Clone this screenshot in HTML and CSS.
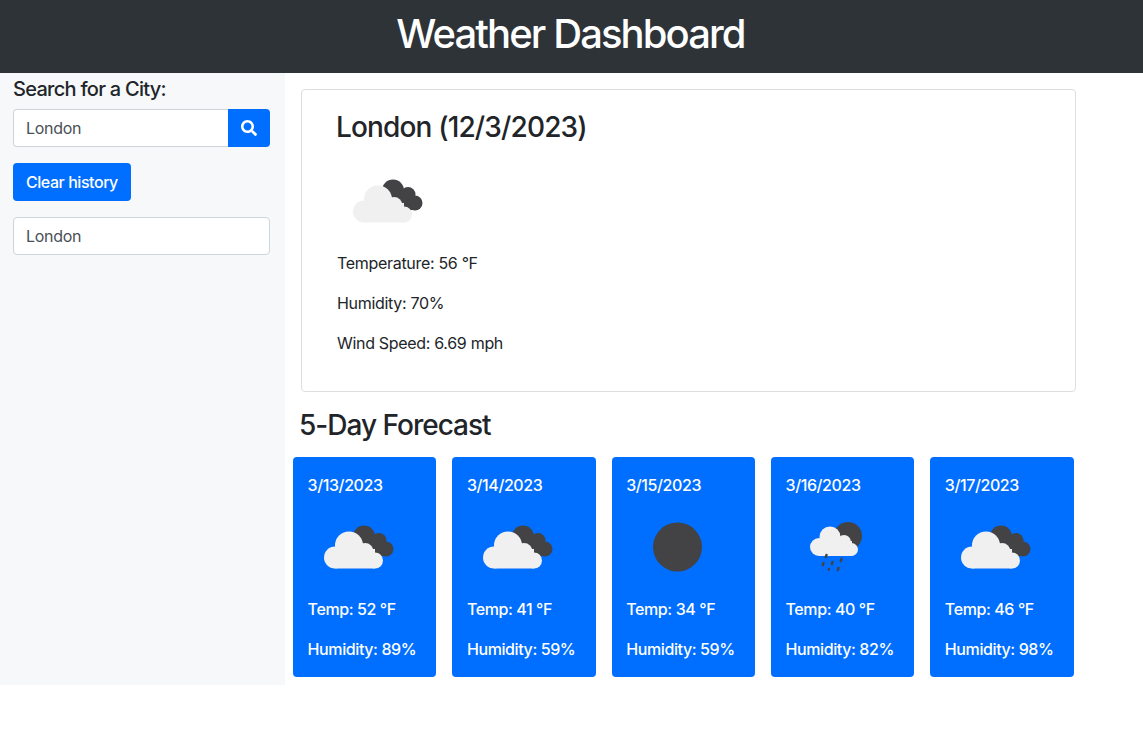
FILE: index.html
```html
<!DOCTYPE html>
<html lang="en">
<head>
<meta charset="utf-8">
<title>Weather Dashboard</title>
<link rel="stylesheet" href="styles.css">
</head>
<body>
<svg class="defs" width="0" height="0" aria-hidden="true">
  <symbol id="clouds" viewBox="0 0 100 100">
    <g class="dark"><circle cx="56" cy="39.5" r="11"/><circle cx="71" cy="43.5" r="7.5"/><circle cx="78" cy="52" r="7.5"/><rect x="52" y="44" width="24" height="15"/></g>
    <g class="light"><circle cx="27" cy="60.5" r="11"/><circle cx="41" cy="48.5" r="14"/><circle cx="57" cy="54.5" r="8.5"/><circle cx="67" cy="63.5" r="8"/><rect x="27" y="52" width="40" height="19.5"/></g>
  </symbol>
  <symbol id="sun" viewBox="0 0 100 100">
    <circle class="dark" cx="51.5" cy="50" r="24.5"/>
  </symbol>
  <symbol id="rain" viewBox="0 0 100 100">
    <circle class="dark" cx="62" cy="39" r="14"/>
    <g class="light"><circle cx="33" cy="50" r="9"/><circle cx="44" cy="40" r="10.5"/><circle cx="58" cy="45" r="7"/><circle cx="65.5" cy="52.5" r="6.5"/><rect x="33" y="44" width="33" height="15"/></g>
    <g class="drops"><path d="M40.5 58l-.7 2"/><path d="M55.5 62l-.7 2"/><path d="M46.5 65l-.7 2"/><path d="M37.5 66l-.7 2"/><path d="M43 72l-.3 .6"/><path d="M52.5 71l-.7 2"/></g>
  </symbol>
</svg>
<header class="topbar"><h1 class="title">Weather Dashboard</h1></header>
<div class="layout">
  <aside class="sidebar">
    <h2 class="search-label">Search for a City:</h2>
    <div class="search-group">
      <div class="search-input">London</div>
      <button class="search-btn" type="button" aria-label="Search">
        <svg class="search-icon" viewBox="0 0 512 512"><path d="M505 442.7L405.3 343c-4.5-4.5-10.6-7-17-7H372c27.6-35.3 44-79.7 44-128C416 93.1 322.9 0 208 0S0 93.1 0 208s93.1 208 208 208c48.3 0 92.7-16.4 128-44v16.3c0 6.4 2.5 12.5 7 17l99.7 99.7c9.4 9.4 24.6 9.4 33.9 0l28.3-28.3c9.4-9.4 9.4-24.6.1-34zM208 336c-70.7 0-128-57.2-128-128 0-70.7 57.2-128 128-128 70.7 0 128 57.2 128 128 0 70.7-57.2 128-128 128z"/></svg>
      </button>
    </div>
    <button class="clear-btn" type="button">Clear history</button>
    <div class="history-item">London</div>
  </aside>
  <main class="content">
    <section class="current">
      <h2 class="current-title">London (12/3/2023)</h2>
      <svg class="icon"><use href="#clouds"/></svg>
      <p class="line">Temperature: 56 °F</p>
      <p class="line">Humidity: 70%</p>
      <p class="line">Wind Speed: 6.69 mph</p>
    </section>
    <h2 class="forecast-title">5-Day Forecast</h2>
    <div class="forecast">
      <article class="day"><p class="date">3/13/2023</p><svg class="icon"><use href="#clouds"/></svg><p class="line">Temp: 52 °F</p><p class="line">Humidity: 89%</p></article>
      <article class="day"><p class="date">3/14/2023</p><svg class="icon"><use href="#clouds"/></svg><p class="line">Temp: 41 °F</p><p class="line">Humidity: 59%</p></article>
      <article class="day"><p class="date">3/15/2023</p><svg class="icon"><use href="#sun"/></svg><p class="line">Temp: 34 °F</p><p class="line">Humidity: 59%</p></article>
      <article class="day"><p class="date">3/16/2023</p><svg class="icon"><use href="#rain"/></svg><p class="line">Temp: 40 °F</p><p class="line">Humidity: 82%</p></article>
      <article class="day"><p class="date">3/17/2023</p><svg class="icon"><use href="#clouds"/></svg><p class="line">Temp: 46 °F</p><p class="line">Humidity: 98%</p></article>
    </div>
  </main>
</div>
</body>
</html>
```
FILE: styles.css
```css
* { box-sizing: border-box; }
html, body { margin: 0; padding: 0; }
body {
  font-family: Inter, "Liberation Sans", sans-serif;
  font-size: 16px;
  line-height: 24px;
  letter-spacing: -0.31px;
  color: #212529;
  background: #fff;
}
.defs { display: block; height: 0; }
.dark { fill: #434244; }
.light { fill: #f0f0f0; }
.drops { fill: none; stroke: #434244; stroke-width: 2.4; stroke-linecap: round; }

.topbar { background: #2e3338; height: 73px; padding: 0 2px 6px 0; display: flex; align-items: center; justify-content: center; }
.title { margin: 0; font-size: 40px; line-height: 48px; font-weight: 500; letter-spacing: -1.9px; color: #fff; }

.layout { display: flex; align-items: stretch; }
.sidebar { width: 285px; flex: none; background: #f7f8fa; padding: 4px 15px 0 13px; }
.search-label { margin: 0 0 8px; font-size: 20px; line-height: 24px; font-weight: 500; letter-spacing: -0.72px; }
.search-group { display: flex; height: 38px; }
.search-input {
  flex: 1;
  background: #fff;
  border: 1px solid #ced4da;
  border-right: none;
  border-radius: 4px 0 0 4px;
  padding: 6px 12px;
  color: #495057;
}
.search-btn {
  width: 42px;
  border: none;
  border-radius: 0 4px 4px 0;
  background: #006fff;
  display: flex;
  align-items: center;
  justify-content: center;
  padding: 0;
}
.search-icon { width: 16px; height: 16px; fill: #fff; }
.clear-btn {
  display: block;
  margin-top: 16px;
  height: 38px;
  padding: 0 13px;
  border: none;
  border-radius: 4px;
  background: #006fff;
  color: #fff;
  font: 500 16px/24px Inter, "Liberation Sans", sans-serif;
  letter-spacing: -0.45px;
}
.history-item {
  margin-top: 16px;
  height: 38px;
  background: #fff;
  border: 1px solid #ced4da;
  border-radius: 4px;
  padding: 6px 12px;
  color: #495057;
}

.content { flex: none; width: 789px; padding: 16px 0 8px 8px; }
.current {
  margin-left: 8px;
  width: 775px;
  border: 1px solid #dcdfe2;
  border-radius: 4px;
  padding: 21px 35px 20.4px;
}
.current-title { margin: 0 0 6px -1px; font-size: 28px; line-height: 33.6px; font-weight: 500; letter-spacing: -0.85px; }
.icon { display: block; width: 100px; height: 100px; }
.line { margin: 0 0 16px; }
.forecast-title { margin: 17px 0 14.4px; padding-left: 6px; font-size: 28px; line-height: 33.6px; font-weight: 500; letter-spacing: -1px; }
.forecast { display: flex; gap: 16px; width: 780.6px; }
.day {
  flex: 1;
  min-width: 0;
  background: #006fff;
  color: #fff;
  border-radius: 4px;
  padding: 16px 14.6px 0;
  font-weight: 450;
  letter-spacing: -0.4px;
}
.date { margin: 0; }
```
